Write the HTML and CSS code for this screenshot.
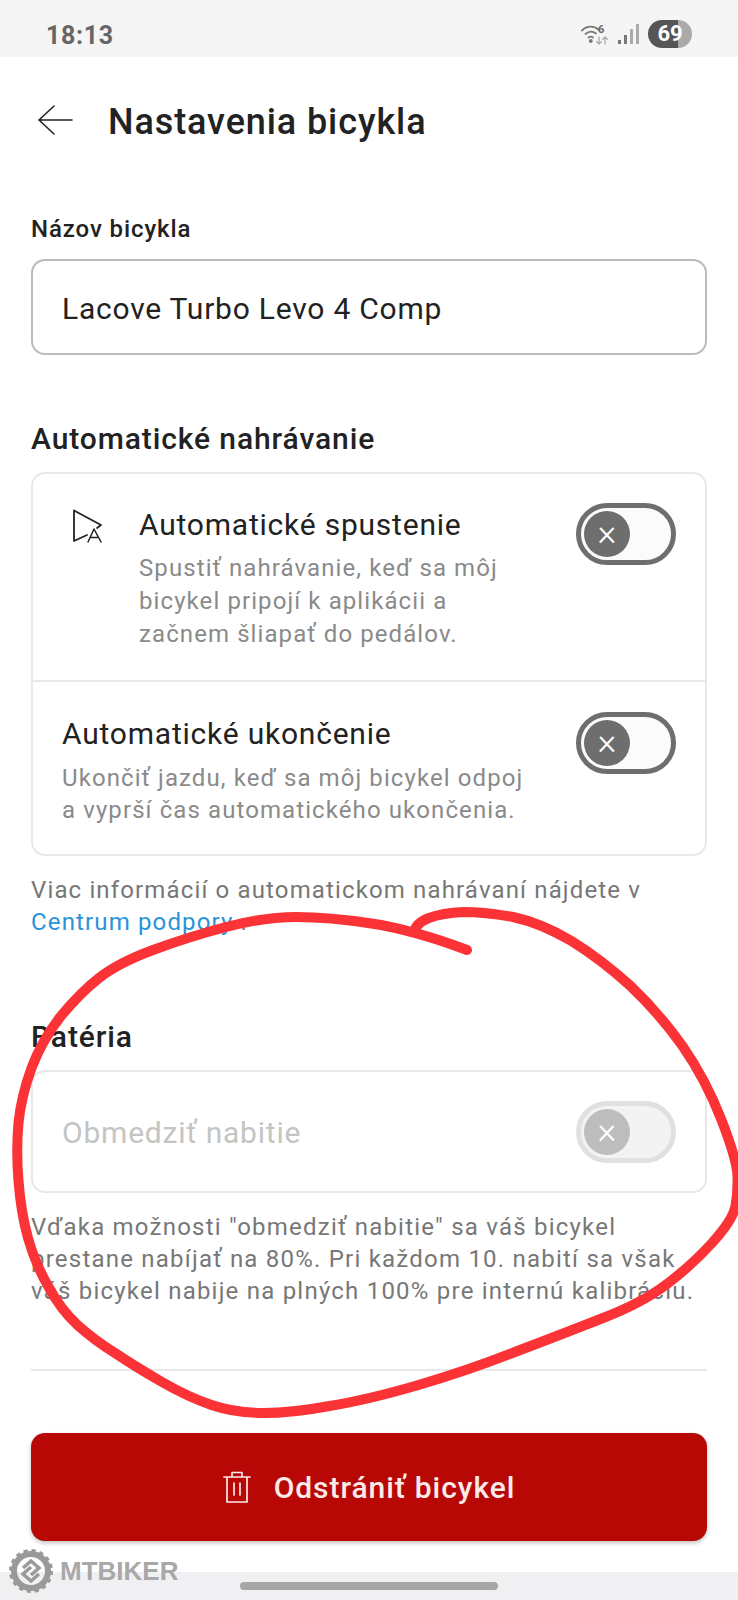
FILE: index.html
```html
<!DOCTYPE html>
<html lang="sk">

<head>
    <meta charset="UTF-8">
    <meta name="viewport" content="width=device-width, initial-scale=1.0">
    <title>Nastavenia bicykla</title>
    <link rel="stylesheet" href="styles.css">
</head>

<body>
    <div class="page">
        <div class="status-bar">
            <span class="time">18:13</span>
            <div class="status-icons">
                <svg class="wifi" width="28" height="22" viewBox="0 0 28 22" fill="none" stroke="#777" stroke-width="1.8" stroke-linecap="round">
                    <path d="M1 7.5C6 2.5 13 2.5 18 7" />
                    <path d="M4.5 11C8 8 11.5 8 15 10.5" />
                    <path d="M7.5 14.5C9 13.4 10.5 13.4 12 14.5" />
                    <circle cx="9.8" cy="18" r="1" fill="#777" />
                    <path d="M18 14v7M15.8 18.8l2.2 2.2 2.2-2.2" stroke="#aaa" stroke-width="1.3" />
                    <path d="M24 21v-7M21.8 16.2l2.2-2.2 2.2 2.2" stroke="#aaa" stroke-width="1.3" />
                </svg>
                <span class="wifi-six">6</span>
                <div class="signal">
                    <span class="bar bar-1"></span>
                    <span class="bar bar-2"></span>
                    <span class="bar bar-3"></span>
                    <span class="bar bar-4"></span>
                </div>
                <span class="battery">69</span>
            </div>
        </div>

        <div class="header">
            <svg class="back" width="36" height="30" viewBox="0 0 36 30" fill="none" stroke="#222" stroke-width="1.6" stroke-linecap="round" stroke-linejoin="round">
                <path d="M35 15H2M17 1L2 15l15 14" />
            </svg>
            <h1>Nastavenia bicykla</h1>
        </div>

        <div class="content">
            <label class="field-label" for="bike-name">Názov bicykla</label>
            <input class="text-input" type="text" id="bike-name" value="Lacove Turbo Levo 4 Comp">

            <h2 class="auto-title">Automatické nahrávanie</h2>
            <div class="card">
                <div class="row row-start">
                    <svg class="row-icon" width="32" height="34" viewBox="0 0 32 34" fill="none" stroke="#222" stroke-width="1.8" stroke-linecap="round" stroke-linejoin="round">
                        <path d="M2 1.500L29 16l-4 3M2 1.500V32l13-6" />
                        <path d="M16 33l6-13 7 13M18.500 28.500h8" stroke-width="1.500" />
                    </svg>
                    <div class="row-text">
                        <div class="row-title">Automatické spustenie</div>
                        <p class="row-sub">Spustiť nahrávanie, keď sa môj<br>bicykel pripojí k aplikácii a<br>začnem šliapať do pedálov.</p>
                    </div>
                    <span class="toggle"><span class="thumb">&times;</span></span>
                </div>
                <div class="row row-end">
                    <div class="row-text">
                        <div class="row-title">Automatické ukončenie</div>
                        <p class="row-sub">Ukončiť jazdu, keď sa môj bicykel odpoj<br>a vyprší čas automatického ukončenia.</p>
                    </div>
                    <span class="toggle"><span class="thumb">&times;</span></span>
                </div>
            </div>
            <p class="note note-auto">Viac informácií o automatickom nahrávaní nájdete v<br><a href="#">Centrum podpory</a> .</p>

            <h2 class="battery-title">Batéria</h2>
            <div class="card">
                <div class="row row-limit">
                    <div class="row-title">Obmedziť nabitie</div>
                    <span class="toggle toggle-off"><span class="thumb">&times;</span></span>
                </div>
            </div>
            <p class="note note-battery">Vďaka možnosti "obmedziť nabitie" sa váš bicykel<br>prestane nabíjať na 80%. Pri každom 10. nabití sa však<br>váš bicykel nabije na plných 100% pre internú kalibráciu.</p>

            <div class="divider"></div>

            <button class="delete-btn">
                <svg width="28" height="32" viewBox="0 0 28 32" fill="none" stroke="#fbeaea" stroke-width="1.700" stroke-linecap="round" stroke-linejoin="round">
                    <path d="M1 6h26M4 6v25h20V6M9 6V1.500h10V6M11 12v12M17 12v12" />
                </svg>
                Odstrániť bicykel
            </button>
        </div>

        <div class="nav-bar"><span class="nav-pill"></span></div>

        <!-- watermark of the forum the picture was posted on -->
        <div class="watermark">
            <svg width="44" height="44" viewBox="0 0 44 44" fill="none">
                <circle cx="22" cy="22" r="17" stroke="#999" stroke-width="6" />
                <circle cx="22" cy="22" r="20" stroke="#999" stroke-width="4" stroke-dasharray="4 3.850" />
                <path d="M14 19l8-7 8 7-8 7M30 25l-8 7-8-7 8-7" stroke="#999" stroke-width="3.500" />
            </svg>
            <span>MTBIKER</span>
        </div>

        <!-- hand drawn circle on top of the screenshot -->
        <svg class="scribble" width="738" height="1600" viewBox="0 0 738 1600" fill="none">
            <path d="M467 950Q414 930 371.500 923.500Q329 917 296.500 917Q264 917 226 927Q188 937 153 950Q118 963 99 978Q80 993 61 1016Q42 1040 31.500 1068Q21 1097 18.500 1123Q16 1150 18.500 1181Q21 1213 28 1238Q35 1263 48 1286Q61 1310 77.500 1325Q94 1340 115 1353Q136 1367 162 1382Q188 1397 211.500 1405Q235 1413 263.500 1413Q292 1413 329.500 1406Q367 1400 418.500 1385Q470 1370 517.500 1351Q565 1333 603 1318Q642 1303 667 1284Q692 1265 712 1243Q733 1220 735.500 1206Q738 1193 737.500 1176Q737 1160 721.500 1120Q706 1080 682.500 1046Q659 1013 630.500 986Q602 960 571.500 941Q541 923 513 917Q485 912 463.500 912Q442 913 429 918Q416 923 414 932" stroke="#fb3236" stroke-width="10" stroke-linecap="round" stroke-linejoin="round" />
        </svg>
    </div>
</body>

</html>
```

FILE: styles.css
```css
* {
    margin: 0px;
    padding: 0px;
    box-sizing: border-box;
}

body {
    font-family: "Roboto", "Noto Sans", sans-serif;
    background: #fff;
    color: #222;
}

.page {
    position: relative;
    width: 738px;
    height: 1600px;
    overflow: hidden;
    display: flex;
    flex-direction: column;
}

.status-bar {
    height: 57px;
    background: #f5f5f5;
    display: flex;
    align-items: center;
    justify-content: space-between;
    padding: 0 46px 0 46px;
    flex-shrink: 0;
}

.status-bar .time {
    font-size: 25px;
    font-weight: 700;
    letter-spacing: 0.7px;
    color: #666;
    margin-top: 13px;
}

.status-icons {
    display: flex;
    align-items: center;
    margin-top: 11px;
    position: relative;
}

.wifi-six {
    position: absolute;
    left: 17px;
    top: 3px;
    font-size: 11px;
    font-weight: 700;
    color: #666;
}

.signal {
    display: flex;
    align-items: flex-end;
    gap: 3px;
    height: 20px;
    margin: 0 9px 0 9px;
}

.bar {
    width: 3px;
    background: #777;
}

.bar-1 {
    height: 4px;
}

.bar-2 {
    height: 9px;
}

.bar-3 {
    height: 15px;
    background: #aaa;
}

.bar-4 {
    height: 20px;
    background: #aaa;
}

.battery {
    width: 44px;
    height: 28px;
    border-radius: 14px;
    background: linear-gradient(to right, #555 68%, #aaa 68%);
    color: #fff;
    font-size: 22px;
    font-weight: 700;
    line-height: 28px;
    text-align: center;
}

.header {
    height: 126px;
    display: flex;
    align-items: center;
    padding-left: 37px;
    flex-shrink: 0;
}

.header h1 {
    font-size: 36px;
    font-weight: 500;
    letter-spacing: 0.9px;
    margin-left: 35px;
    margin-top: 4px;
    color: #222;
}

.content {
    padding: 0 31px;
    flex: 1;
}

.field-label {
    display: block;
    font-size: 24px;
    font-weight: 500;
    letter-spacing: 0.9px;
    line-height: 30px;
    margin-top: 31px;
    color: #222;
}

.text-input {
    display: block;
    width: 100%;
    height: 96px;
    margin-top: 15px;
    padding: 2px 29px 0 29px;
    border: 2px solid #bbb;
    border-radius: 14px;
    outline: none;
    font-family: inherit;
    font-size: 30px;
    letter-spacing: 0.77px;
    color: #222;
}

h2 {
    font-size: 30px;
    font-weight: 500;
    letter-spacing: 0.9px;
    line-height: 36px;
    color: #222;
}

.auto-title {
    margin-top: 66px;
}

.battery-title {
    margin-top: 81px;
}

.card {
    border: 2px solid #e8e8e8;
    border-radius: 14px;
    margin-top: 15px;
}

.row {
    display: flex;
    align-items: flex-start;
}

.row-start {
    height: 208px;
    padding: 31px 29px 0 29px;
    border-bottom: 2px solid #e8e8e8;
}

.row-end {
    height: 172px;
    padding: 32px 29px 0 29px;
}

.row-limit {
    height: 119px;
    padding: 0 29px;
    align-items: center;
}

.row-icon {
    margin: 4px 35px 0 10px;
    flex-shrink: 0;
}

.row-text {
    flex: 1;
}

.row-title {
    font-size: 30px;
    letter-spacing: 0.78px;
    line-height: 40px;
    color: #222;
    flex: 1;
}

.row-sub {
    font-size: 24px;
    letter-spacing: 1.09px;
    line-height: 33px;
    color: #8a8a8a;
    margin-top: 7px;
}

.row-end .row-sub {
    line-height: 32px;
    margin-top: 8px;
}

.row-limit .row-title {
    color: #c4c4c4;
    margin-top: 3px;
}

.toggle {
    width: 100px;
    height: 62px;
    border: 5px solid #6e6e6e;
    border-radius: 31px;
    background: #fbfbfb;
    padding: 3px;
    margin-top: -2px;
    flex-shrink: 0;
    display: block;
}

.thumb {
    display: block;
    width: 46px;
    height: 46px;
    border-radius: 50%;
    background: #6e6e6e;
    color: #fff;
    font-size: 36px;
    font-weight: 300;
    line-height: 44px;
    text-align: center;
}

.toggle-off {
    border-color: #e2dfe4;
    background: #f3f3f3;
    margin-top: 0;
}

.toggle-off .thumb {
    background: #bdbdbd;
}

.note {
    font-size: 24px;
    letter-spacing: 1.14px;
    line-height: 32px;
    color: #777;
}

.note a {
    color: #2a93d8;
    text-decoration: none;
}

.note-auto {
    margin-top: 18px;
}

.note-battery {
    margin-top: 18px;
    letter-spacing: 1.22px;
}

.divider {
    height: 2px;
    background: #e8e8e8;
    margin-top: 62px;
}

.delete-btn {
    width: 100%;
    height: 108px;
    margin-top: 62px;
    border: none;
    border-radius: 14px;
    background: #b70805;
    box-shadow: 0 2px 4px rgba(0, 0, 0, 0.25);
    color: #fbeaea;
    font-family: inherit;
    font-size: 30px;
    font-weight: 500;
    letter-spacing: 0.95px;
    display: flex;
    align-items: center;
    justify-content: center;
    gap: 23px;
}

.nav-bar {
    height: 28px;
    background: #f0f0f2;
    display: flex;
    justify-content: center;
    padding-top: 10px;
    flex-shrink: 0;
}

.nav-pill {
    width: 258px;
    height: 8px;
    border-radius: 4px;
    background: #a6a6a6;
}

.watermark {
    position: absolute;
    left: 9px;
    top: 1549px;
    display: flex;
    align-items: center;
    gap: 7px;
    color: #a8a8a8;
    font-family: "Liberation Sans", sans-serif;
    font-size: 26px;
    font-weight: 700;
}

.scribble {
    position: absolute;
    left: 0;
    top: 0;
    pointer-events: none;
}
```
